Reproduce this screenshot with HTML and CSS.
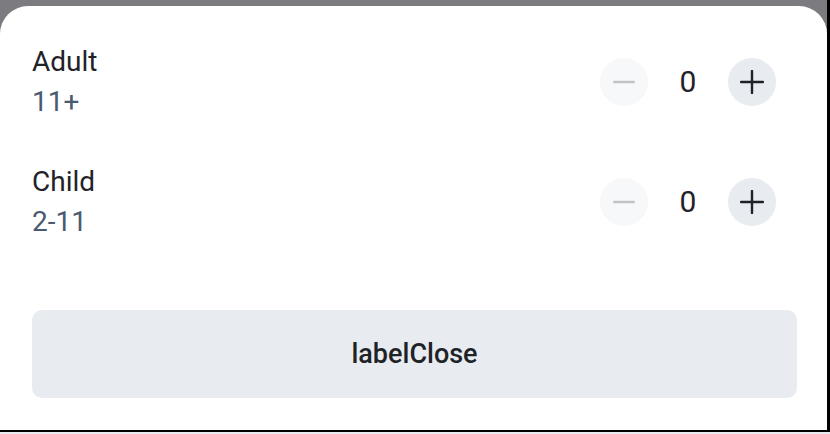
FILE: index.html
```html
<!DOCTYPE html>
<html>
<head>
<meta charset="utf-8">
<link rel="stylesheet" href="styles.css">
</head>
<body>
<div class="frame">
  <div class="viewport">
    <div class="sheet">
      <div class="rows">
        <div class="row">
          <div class="info">
            <div class="title">Adult</div>
            <div class="sub">11+</div>
          </div>
          <div class="counter">
            <button class="circle minus" aria-label="decrease">
              <svg width="22" height="22" viewBox="0 0 22 22"><path d="M1 11h20" stroke="currentColor" stroke-width="2.4" stroke-linecap="round"/></svg>
            </button>
            <span class="value">0</span>
            <button class="circle plus" aria-label="increase">
              <svg width="24" height="24" viewBox="0 0 24 24"><path d="M1 12h22M12 1v22" stroke="currentColor" stroke-width="2.4" stroke-linecap="round"/></svg>
            </button>
          </div>
        </div>
        <div class="row">
          <div class="info">
            <div class="title">Child</div>
            <div class="sub">2-11</div>
          </div>
          <div class="counter">
            <button class="circle minus" aria-label="decrease">
              <svg width="22" height="22" viewBox="0 0 22 22"><path d="M1 11h20" stroke="currentColor" stroke-width="2.4" stroke-linecap="round"/></svg>
            </button>
            <span class="value">0</span>
            <button class="circle plus" aria-label="increase">
              <svg width="24" height="24" viewBox="0 0 24 24"><path d="M1 12h22M12 1v22" stroke="currentColor" stroke-width="2.4" stroke-linecap="round"/></svg>
            </button>
          </div>
        </div>
      </div>
      <button class="close">labelClose</button>
    </div>
  </div>
</div>
<div class="strip"></div>
</body>
</html>
```
FILE: styles.css
```css
html, body {
  margin: 0;
  padding: 0;
}
body {
  width: 830px;
  height: 434px;
  background: #000;
  font-family: Roboto, "Liberation Sans", sans-serif;
  overflow: hidden;
}
.frame {
  height: 432px;
  display: flex;
  flex-direction: column;
}
.viewport {
  width: 827px;
  height: 430px;
  box-sizing: border-box;
  padding-top: 6px;
  background: #7b7b80;
  display: flex;
  flex-direction: column;
}
.sheet {
  flex: 1;
  background: #fff;
  border-radius: 28px 28px 0 0;
  box-sizing: border-box;
  padding: 36px 30px 32px 32px;
  display: flex;
  flex-direction: column;
}
.rows {
  display: flex;
  flex-direction: column;
  gap: 40px;
}
.row {
  display: flex;
  align-items: center;
  justify-content: space-between;
}
.info {
  font-size: 28px;
  line-height: 40px;
}
.title {
  color: #1f2328;
}
.sub {
  color: #4a5a70;
}
.counter {
  display: flex;
  align-items: center;
  margin-right: 21px;
  margin-top: -1px;
}
.circle {
  width: 48px;
  height: 48px;
  border-radius: 50%;
  border: none;
  padding: 0;
  display: flex;
  align-items: center;
  justify-content: center;
}
.minus {
  background: #f7f8fa;
  color: #c2c4c8;
}
.plus {
  background: #e8ecf0;
  color: #1f2328;
}
.value {
  width: 80px;
  text-align: center;
  font-size: 30px;
  color: #1f2328;
}
.close {
  margin-top: auto;
  height: 88px;
  width: 100%;
  border: none;
  border-radius: 10px;
  background: #e8ecf0;
  color: #1f2328;
  font-family: Roboto, "Liberation Sans", sans-serif;
  font-size: 27px;
  font-weight: 500;
}
.strip {
  height: 2px;
  background: #e8ecf0;
}
```
